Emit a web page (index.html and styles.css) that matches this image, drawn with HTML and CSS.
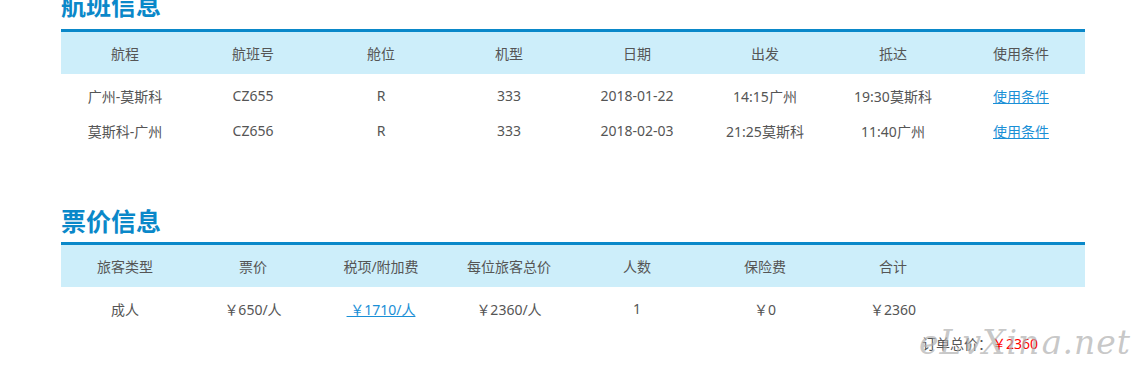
FILE: index.html
```html
<!DOCTYPE html>
<html lang="zh-CN">
<head>
<meta charset="utf-8">
<title>航班信息</title>
<link rel="stylesheet" href="styles.css">
</head>
<body>
<div class="page">
  <section class="section section-first">
    <h2 class="section-title">航班信息</h2>
    <div class="grid-table">
      <div class="thead">
        <div>航程</div><div>航班号</div><div>舱位</div><div>机型</div><div>日期</div><div>出发</div><div>抵达</div><div>使用条件</div>
      </div>
      <div class="tbody">
        <div class="trow">
          <div>广州-莫斯科</div><div>CZ655</div><div>R</div><div>333</div><div>2018-01-22</div><div>14:15广州</div><div>19:30莫斯科</div><div><a href="#" class="link">使用条件</a></div>
        </div>
        <div class="trow">
          <div>莫斯科-广州</div><div>CZ656</div><div>R</div><div>333</div><div>2018-02-03</div><div>21:25莫斯科</div><div>11:40广州</div><div><a href="#" class="link">使用条件</a></div>
        </div>
      </div>
    </div>
  </section>

  <section class="section section-second">
    <h2 class="section-title">票价信息</h2>
    <div class="grid-table">
      <div class="thead">
        <div>旅客类型</div><div>票价</div><div>税项/附加费</div><div>每位旅客总价</div><div>人数</div><div>保险费</div><div>合计</div><div></div>
      </div>
      <div class="tbody">
        <div class="trow">
          <div>成人</div><div>￥650/人</div><div><a href="#" class="link">&nbsp;￥1710/人</a></div><div>￥2360/人</div><div>1</div><div>￥0</div><div>￥2360</div><div></div>
        </div>
      </div>
    </div>
    <div class="order-total">订单总价：<span class="total-price">￥2360</span></div>
    <div class="watermark">eLvXing.net</div>
  </section>
</div>
</body>
</html>
```

FILE: styles.css
```css
html, body {
  margin: 0;
  padding: 0;
  background: #fff;
}

body {
  font-family: "Noto Sans", "Noto Sans CJK SC", sans-serif;
  font-size: 14px;
  color: #555;
  overflow: hidden;
}

.page {
  width: 1024px;
  margin: -14px 0 0 61px;
}

.section {
  position: relative;
}

.section-second {
  margin-top: 54px;
}

.section-title {
  margin: 0 0 4px 0;
  font-family: "Noto Sans CJK SC", sans-serif;
  font-size: 25px;
  line-height: 36px;
  font-weight: 700;
  color: #0a88c9;
}

.section-first .section-title {
  margin-bottom: 7px;
}

.grid-table {
  border-top: 3px solid #0a88c9;
}

.thead,
.trow {
  display: grid;
  grid-template-columns: repeat(8, 128px);
  align-items: center;
  text-align: center;
}

.thead {
  height: 42px;
  background: #cdeefa;
}

.tbody {
  padding-top: 4px;
}

.trow {
  height: 35px;
}

.link {
  color: #1a8fd6;
  text-decoration: underline;
}

.order-total {
  margin-top: 8px;
  padding-right: 47px;
  line-height: 20px;
  text-align: right;
}

.total-price {
  color: #f00;
}

.watermark {
  position: absolute;
  right: -46px;
  bottom: -8px;
  font-family: "DejaVu Serif", serif;
  font-style: italic;
  font-size: 33px;
  letter-spacing: 1px;
  color: rgba(175, 175, 175, 0.7);
  pointer-events: none;
}
```
